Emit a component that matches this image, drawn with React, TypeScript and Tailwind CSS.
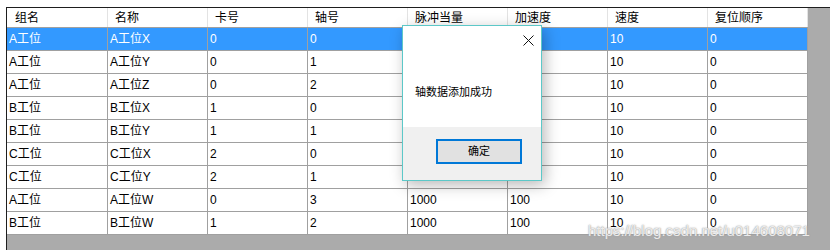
const COLUMNS = ["组名", "名称", "卡号", "轴号", "脉冲当量", "加速度", "速度", "复位顺序"];

type AxisRow = string[];

const ROWS: AxisRow[] = [
  ["A工位", "A工位X", "0", "0", "", "", "10", "0"],
  ["A工位", "A工位Y", "0", "1", "", "", "10", "0"],
  ["A工位", "A工位Z", "0", "2", "", "", "10", "0"],
  ["B工位", "B工位X", "1", "0", "", "", "10", "0"],
  ["B工位", "B工位Y", "1", "1", "", "", "10", "0"],
  ["C工位", "C工位X", "2", "0", "", "", "10", "0"],
  ["C工位", "C工位Y", "2", "1", "", "", "10", "0"],
  ["A工位", "A工位W", "0", "3", "1000", "100", "10", "0"],
  ["B工位", "B工位W", "1", "2", "1000", "100", "10", "0"],
];

const SELECTED = 0;

const cellWidth = (i: number) => (i === 0 ? "w-[101px]" : "w-[100px]");

const MessageBox = () => (
  <div className="absolute left-[402px] top-[25px] flex h-[156px] w-[140px] flex-col border border-[#5cc8c8] bg-white shadow-[3px_4px_14px_rgba(0,0,0,0.28)]">
    <div className="relative flex-1">
      <svg className="absolute left-[120px] top-[9px]" width="11" height="11" viewBox="0 0 11 11">
        <path d="M0.5 0.5L10.5 10.5M10.5 0.5L0.5 10.5" stroke="#111" strokeWidth="1" />
      </svg>
      <p className="absolute left-[12px] top-[59px] text-[11px] leading-[14px] text-black">轴数据添加成功</p>
    </div>
    <div className="flex h-[53px] items-start justify-end bg-[#f0f0f0] pr-[19px] pt-[12px]">
      <button className="flex h-[25px] w-[86px] items-center justify-center border-2 border-[#0078d7] bg-[#e1e1e1] text-[11px] text-black">
        确定
      </button>
    </div>
  </div>
);

export default function App() {
  return (
    <div className="relative h-[250px] w-[830px] overflow-hidden bg-white pl-[6px] pt-[7px] font-['Liberation_Sans','Noto_Sans_CJK_SC',sans-serif]">
      <div className="h-full border-l border-t border-[#1e1e1e] bg-[#ababab]">
        <div className="w-[801px] bg-white">
          <div className="flex h-[20px] border-b border-[#a0a0a0]">
            {COLUMNS.map((c, i) => (
              <div
                key={c}
                className={`${cellWidth(i)} flex items-center border-r border-[#e3e3e3] pl-[7px] text-[12px] text-black ${i === 0 ? "pl-[8px]" : ""}`}
              >
                {c}
              </div>
            ))}
          </div>
          {ROWS.map((row, r) => (
            <div
              key={r}
              className={`flex h-[23px] ${r === SELECTED ? "bg-[#3399ff] text-white" : "text-black"}`}
            >
              {row.map((v, i) => (
                <div
                  key={i}
                  className={`${cellWidth(i)} flex items-center border-b border-r border-[#a0a0a0] pl-[2px] text-[12px]`}
                >
                  {v}
                </div>
              ))}
            </div>
          ))}
        </div>
      </div>

      <MessageBox />

      <span className="absolute left-[588px] top-[222px] text-[15px] leading-[18px] text-white/80 [text-shadow:0_0_1px_#999,0_0_2px_#aaa]">
        https://blog.csdn.net/u014608071
      </span>
    </div>
  );
}
